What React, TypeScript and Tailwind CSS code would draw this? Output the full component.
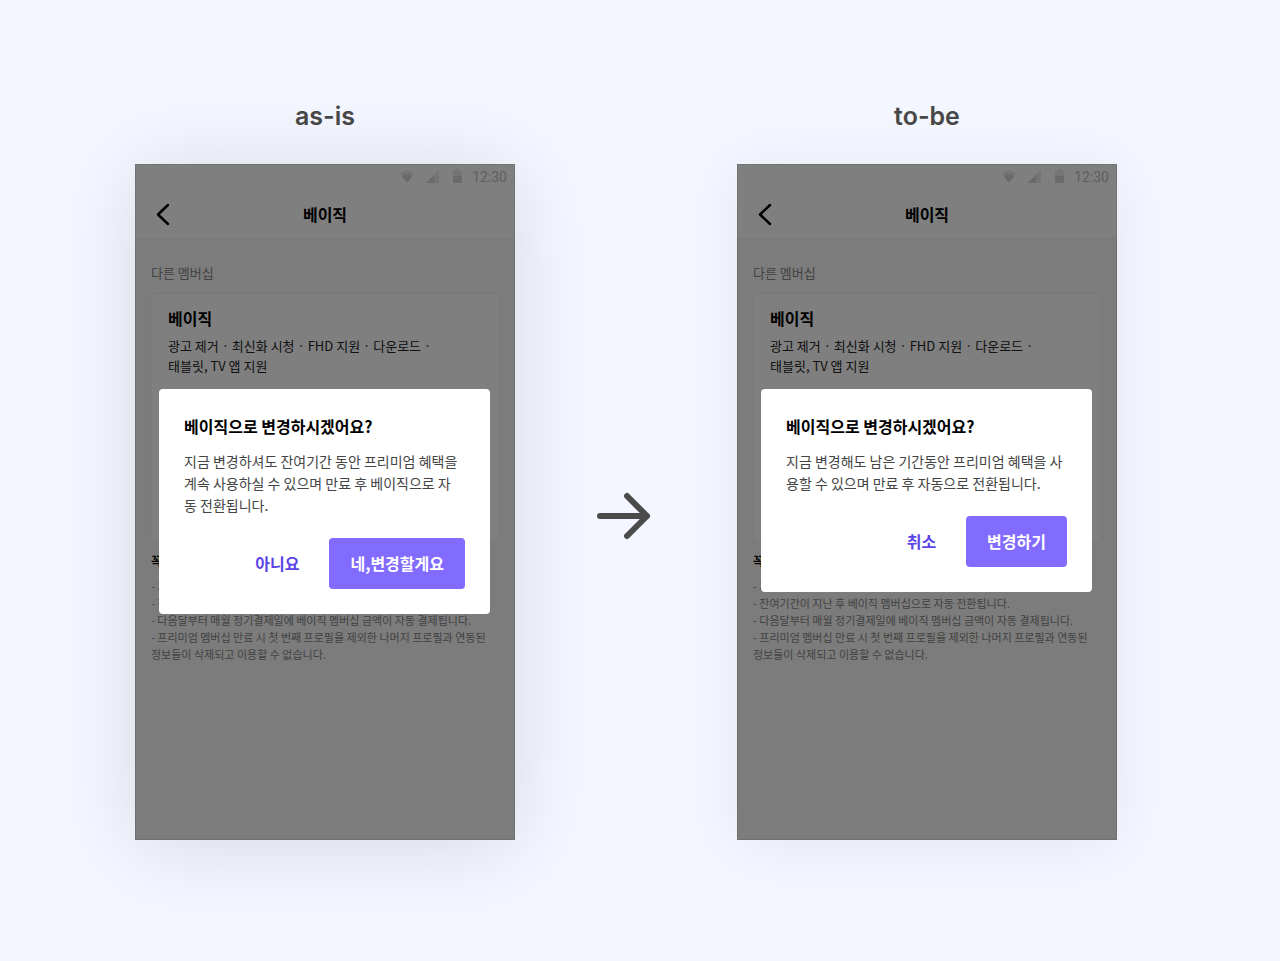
import type { ReactNode } from 'react';

interface DialogCopy {
  body: string[];
  cancel: string;
  confirm: string;
}

interface Variant {
  label: string;
  shadow: string;
  copy: DialogCopy;
}

const TITLE = '베이직으로 변경하시겠어요?';

const AS_IS: Variant = {
  label: 'as-is',
  shadow: 'shadow-[0_6px_80px_rgba(0,0,0,0.12)]',
  copy: {
    body: [
      '지금 변경하셔도 잔여기간 동안 프리미엄 혜택을',
      '계속 사용하실 수 있으며 만료 후 베이직으로 자',
      '동 전환됩니다.',
    ],
    cancel: '아니요',
    confirm: '네,변경할게요',
  },
};

const TO_BE: Variant = {
  label: 'to-be',
  shadow: 'shadow-[0_4px_60px_rgba(0,0,0,0.07)]',
  copy: {
    body: [
      '지금 변경해도 남은 기간동안 프리미엄 혜택을 사',
      '용할 수 있으며 만료 후 자동으로 전환됩니다.',
    ],
    cancel: '취소',
    confirm: '변경하기',
  },
};

const NOTES = [
  '지금 변경해도 혜택은 유지됩니다.',
  '잔여기간이 지난 후 베이직 멤버십으로 자동 전환됩니다.',
  '다음달부터 매월 정기결제일에 베이직 멤버십 금액이 자동 결제됩니다.',
];

export default function App() {
  return (
    <main className="flex min-h-screen items-start justify-center bg-[#f4f7ff] pt-[98px] pr-7 pb-[120px] font-['Noto_Sans_CJK_KR',sans-serif]">
      <Column variant={AS_IS} />
      <div className="flex w-[222px] shrink-0 justify-center pt-[390px] pr-1">
        <ArrowIcon />
      </div>
      <Column variant={TO_BE} />
    </main>
  );
}

function Column({ variant }: { variant: Variant }) {
  return (
    <section className="w-[380px] shrink-0">
      <h2 className="text-center font-['Inter',sans-serif] text-[25px] leading-9 font-semibold text-[#484848]">
        {variant.label}
      </h2>
      <div className={`relative mt-[30px] min-h-[676px] bg-[#f8f8f8] ${variant.shadow}`}>
        <MembershipScreen />
        {/* dimmed layer with the dialog on top */}
        <div className="absolute inset-0 border border-black/10 bg-black/50 pt-[224px] pr-6 pl-[23px]">
          <ConfirmDialog copy={variant.copy} />
        </div>
      </div>
    </section>
  );
}

/** The membership page behind the dialog. */
function MembershipScreen() {
  return (
    <div>
      <div className="bg-white">
        <StatusBar />
        <header className="grid h-[51px] grid-cols-3 items-center border-b border-[#efefef] px-4 pt-px">
          <button type="button" aria-label="뒤로" className="w-6">
            <svg width="24" height="24" viewBox="0 0 24 24" fill="none">
              <path
                d="M17 3L7 12.500L17 22"
                stroke="#000"
                strokeWidth="2.500"
                strokeLinecap="round"
                strokeLinejoin="round"
              />
            </svg>
          </button>
          <h1 className="text-center text-base leading-6 font-bold">베이직</h1>
        </header>
      </div>

      <div className="px-4 pt-6">
        <p className="text-[13px] leading-5 text-[#858585]">다른 멤버십</p>
        <Card>
          <h3 className="text-base leading-6 font-bold">베이직</h3>
          <p className="mt-1.5 text-[13px] leading-5 text-[#222]">
            광고 제거 · 최신화 시청 · FHD 지원 · 다운로드 ·
            <br />
            태블릿, TV 앱 지원
          </p>
        </Card>
        <h4 className="mt-2 text-xs leading-5 font-bold">꼭 확인해주세요!</h4>
        <ul className="mt-[7px] text-[11px] leading-[17px] text-[#858585]">
          {NOTES.map((note) => (
            <li key={note}>- {note}</li>
          ))}
          <li>
            - 프리미엄 멤버십 만료 시 첫 번째 프로필을 제외한 나머지 프로필과 연동된
            <br />
            정보들이 삭제되고 이용할 수 없습니다.
          </li>
        </ul>
      </div>
    </div>
  );
}

function Card({ children }: { children: ReactNode }) {
  return (
    <div className="mt-2.5 min-h-[250px] rounded border border-[#f2f2f2] bg-white px-4 pt-3">
      {children}
    </div>
  );
}

function StatusBar() {
  return (
    <div className="flex h-6 items-center justify-end pr-2 text-[#d4d4d4]">
      <svg width="14" height="13" viewBox="0 0 14 13" fill="currentColor" className="mr-3">
        <path d="M0 3.500Q7-2 14 3.500L7 13Z" opacity="0.500" />
        <path d="M1.800 5.800Q7 2.500 12.200 5.800L7 13Z" />
      </svg>
      <svg width="13" height="13" viewBox="0 0 13 13" fill="currentColor" className="mr-3.5">
        <path d="M0 13L13 0V13Z" opacity="0.500" />
        <path d="M0 13L8 5V13Z" />
      </svg>
      <svg width="9" height="14" viewBox="0 0 9 14" fill="currentColor" className="mr-2.5">
        <path d="M0 2.500Q0 1.500 1 1.500H2.500V0H6.500V1.500H8Q9 1.500 9 2.500V7H0Z" opacity="0.500" />
        <path d="M0 7H9V13Q9 14 8 14H1Q0 14 0 13Z" />
      </svg>
      <span className="pt-px font-['Roboto',sans-serif] text-sm leading-6 text-[#bcbcbc]">12:30</span>
    </div>
  );
}

function ConfirmDialog({ copy }: { copy: DialogCopy }) {
  return (
    <div role="dialog" aria-label={TITLE} className="rounded bg-white px-[25px] py-[25px]">
      <h3 className="text-base leading-6 font-bold text-black">{TITLE}</h3>
      <p className="mt-3 text-sm leading-[22px] whitespace-nowrap text-[#444]">
        {copy.body.map((line) => (
          <span key={line} className="block">
            {line}
          </span>
        ))}
      </p>
      <div className="mt-[22px] flex items-center justify-end gap-[30px] text-base leading-6 font-bold">
        <button type="button" className="pb-0.5 text-[#5b45e5]">
          {copy.cancel}
        </button>
        <button type="button" className="h-[51px] rounded bg-[#826bff] px-[21px] pb-0.5 text-white">
          {copy.confirm}
        </button>
      </div>
    </div>
  );
}

function ArrowIcon() {
  return (
    <svg width="54" height="56" viewBox="0 0 54 56" fill="none" aria-hidden>
      <path
        d="M3 28H50M30 8L50 28L30 48"
        stroke="#4b4b4b"
        strokeWidth="6"
        strokeLinecap="round"
        strokeLinejoin="round"
      />
    </svg>
  );
}
